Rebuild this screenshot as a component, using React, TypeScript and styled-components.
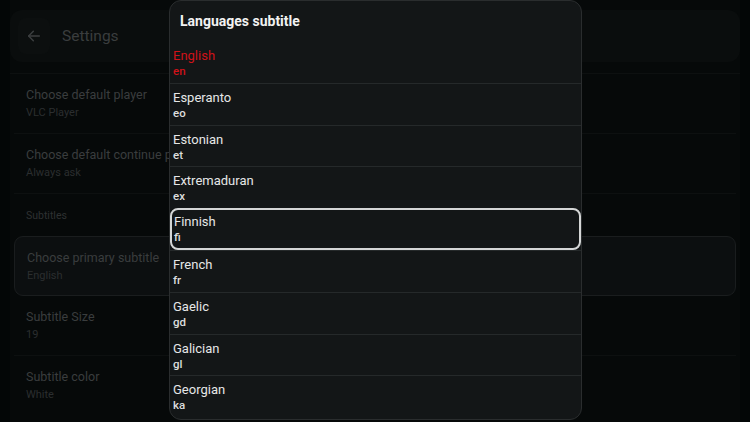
import React from "react";
import styled, { createGlobalStyle } from "styled-components";

const Global = createGlobalStyle`
  html, body { margin: 0; padding: 0; background: #030606; }
  body { font-family: Roboto, "Noto Sans", "Liberation Sans", sans-serif; }
  * { box-sizing: border-box; }
`;

const Page = styled.div`
  position: relative;
  width: 750px;
  height: 422px;
  overflow: hidden;
  background: #030606;
`;

const Panel = styled.div`
  margin: 0 10px;
  height: 100%;
  padding-top: 10px;
  background: #060909;
  display: flex;
  flex-direction: column;
`;

const Header = styled.div`
  height: 52px;
  border-radius: 12px;
  background: #0a0d0d;
  display: flex;
  align-items: center;
  gap: 12px;
  padding-left: 8px;
`;

const BackButton = styled.div`
  width: 32px;
  height: 36px;
  border-radius: 8px;
  background: #0c0f0f;
  display: flex;
  align-items: center;
  justify-content: center;
`;

const HeaderTitle = styled.div`
  font-size: 15.5px;
  color: #3a3d3e;
  font-weight: 400;
`;

const List = styled.div`
  margin-top: 11px;
  border-top: 1px solid #0d1010;
  display: flex;
  flex-direction: column;
`;

const Item = styled.div<{ $boxed?: boolean; $divider?: boolean }>`
  height: 60px;
  padding: 0 12px;
  margin: 0 4px;
  display: flex;
  flex-direction: column;
  justify-content: center;
  gap: 3px;
  border-bottom: 1px solid ${(p) => (p.$divider ? "#0d1010" : "transparent")};
  ${(p) =>
    p.$boxed
      ? `border: 1px solid #1a1d1e; border-radius: 9px; background: #0c0f10;`
      : ""}
`;

const ItemTitle = styled.div`
  font-size: 12.5px;
  line-height: 16px;
  color: #3a3d3e;
  white-space: nowrap;
`;

const ItemSub = styled.div`
  font-size: 11px;
  line-height: 14px;
  color: #2b2e2f;
`;

const Section = styled.div`
  height: 42px;
  padding: 0 16px;
  display: flex;
  align-items: center;
  font-size: 10.5px;
  color: #2e3132;
`;

const Modal = styled.div`
  position: absolute;
  left: 169px;
  top: 0;
  width: 413px;
  height: 420px;
  background: #131617;
  border: 1px solid #2a2d2e;
  border-radius: 12px;
  overflow: hidden;
  display: flex;
  flex-direction: column;
`;

const ModalTitle = styled.div`
  height: 40px;
  padding-left: 10px;
  display: flex;
  align-items: center;
  font-size: 14px;
  font-weight: 700;
  color: #f2f2f2;
`;

const Row = styled.div<{ $selected?: boolean; $first?: boolean }>`
  height: 41.8px;
  flex-shrink: 0;
  padding: 5px 3px 0;
  border-top: 1px solid ${(p) => (p.$first ? "transparent" : "#25292a")};
  ${(p) =>
    p.$selected
      ? `border: 2px solid #d4d6d6; border-radius: 8px; padding: 3px 2px 0;`
      : ""}
`;

const Name = styled.div<{ $active?: boolean }>`
  font-size: 13px;
  line-height: 17px;
  color: ${(p) => (p.$active ? "#cf1219" : "#e6e7e7")};
`;

const Code = styled.div<{ $active?: boolean }>`
  font-size: 11.5px;
  line-height: 15px;
  font-weight: 500;
  color: ${(p) => (p.$active ? "#cf1219" : "#dcdddd")};
`;

const languages = [
  ["English", "en"],
  ["Esperanto", "eo"],
  ["Estonian", "et"],
  ["Extremaduran", "ex"],
  ["Finnish", "fi"],
  ["French", "fr"],
  ["Gaelic", "gd"],
  ["Galician", "gl"],
  ["Georgian", "ka"],
];

export default function App() {
  return (
    <Page>
      <Global />
      <Panel>
        <Header>
          <BackButton>
            <svg width="16" height="16" viewBox="0 0 24 24" fill="none" stroke="#3c3f40" strokeWidth="2.2" strokeLinecap="round" strokeLinejoin="round">
              <path d="M20 12H4" />
              <path d="M11 5l-7 7 7 7" />
            </svg>
          </BackButton>
          <HeaderTitle>Settings</HeaderTitle>
        </Header>
        <List>
          <Item $divider>
            <ItemTitle>Choose default player</ItemTitle>
            <ItemSub>VLC Player</ItemSub>
          </Item>
          <Item $divider>
            <ItemTitle>Choose default continue playing</ItemTitle>
            <ItemSub>Always ask</ItemSub>
          </Item>
          <Section>Subtitles</Section>
          <Item $boxed>
            <ItemTitle>Choose primary subtitle</ItemTitle>
            <ItemSub>English</ItemSub>
          </Item>
          <Item $divider>
            <ItemTitle>Subtitle Size</ItemTitle>
            <ItemSub>19</ItemSub>
          </Item>
          <Item>
            <ItemTitle>Subtitle color</ItemTitle>
            <ItemSub>White</ItemSub>
          </Item>
        </List>
      </Panel>
      <Modal>
        <ModalTitle>Languages subtitle</ModalTitle>
        {languages.map(([name, code], i) => (
          <Row key={code} $first={i === 0} $selected={name === "Finnish"}>
            <Name $active={i === 0}>{name}</Name>
            <Code $active={i === 0}>{code}</Code>
          </Row>
        ))}
      </Modal>
    </Page>
  );
}
